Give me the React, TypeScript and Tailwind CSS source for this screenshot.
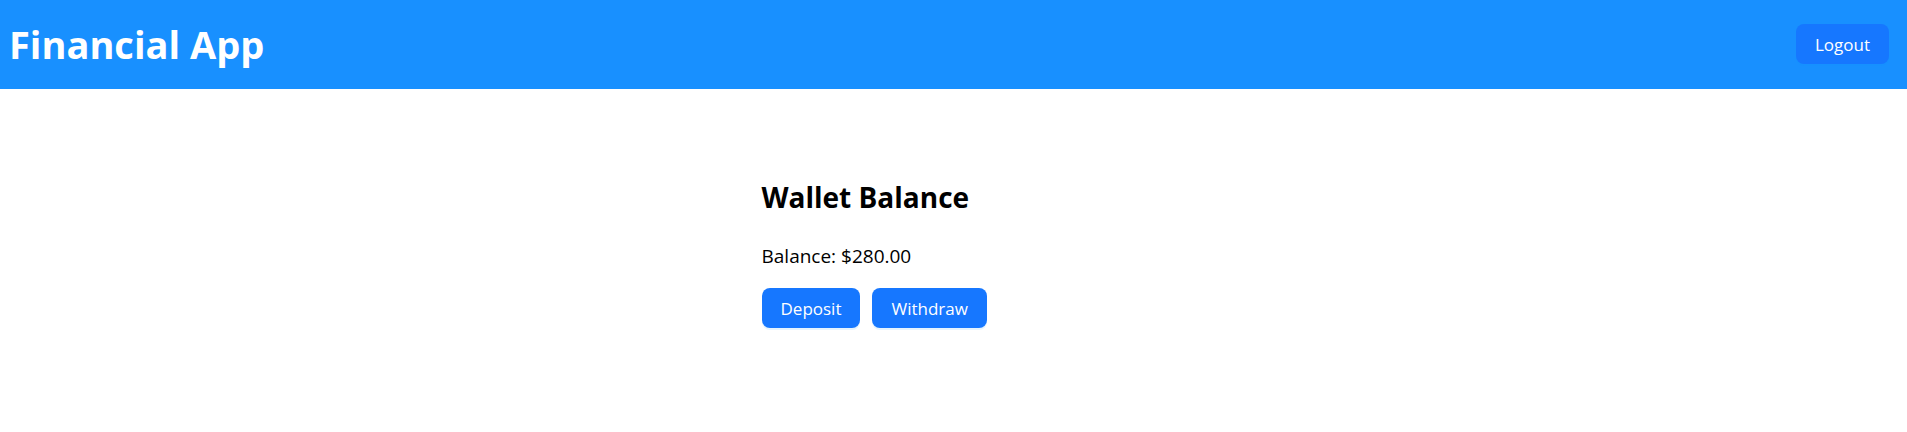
const buttonClass =
  "h-10 rounded-lg bg-[#1677ff] px-[19px] text-[17px] leading-none text-white shadow-[0_2px_0_rgba(5,145,255,0.1)]";

export default function App() {
  return (
    <div className="min-h-screen bg-white font-['Open_Sans','Noto_Sans',sans-serif] text-black">
      <header className="flex items-center justify-between bg-[#1890ff] pt-5 pr-[18px] pb-[21px] pl-[9px]">
        <h1 className="text-[38px] leading-12 font-bold text-white">Financial App</h1>
        <button type="button" className={buttonClass}>Logout</button>
      </header>
      <main className="mx-auto w-full max-w-96 pt-[90px]">
        <h2 className="text-[28px] leading-9 font-bold">Wallet Balance</h2>
        <p className="mt-[27px] text-[19px] leading-7">Balance: $280.00</p>
        <div className="mt-[18px] flex gap-3">
          <button type="button" className={buttonClass}>Deposit</button>
          <button type="button" className={buttonClass}>Withdraw</button>
        </div>
      </main>
    </div>
  );
}
